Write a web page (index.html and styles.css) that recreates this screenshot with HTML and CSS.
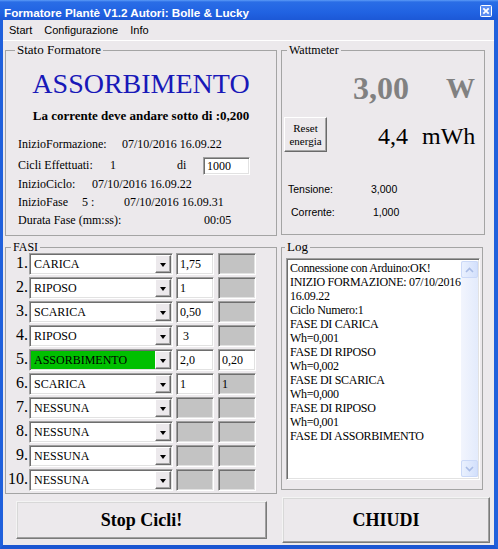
FILE: index.html
```html
<!DOCTYPE html>
<html lang="it">
<head>
<meta charset="utf-8">
<title>Formatore Plantè</title>
<link rel="stylesheet" href="styles.css">
</head>
<body>
<div class="window">
  <div class="titlebar">
    <span class="title">Formatore Plantè V1.2 Autori: Bolle &amp; Lucky</span>
    <svg class="close" width="12" height="12" viewBox="0 0 12 12"><rect x="0.5" y="0.5" width="11" height="11" rx="1" fill="#5b8ef2" stroke="#fff"/><path d="M3.3 3.3 L8.7 8.7 M8.7 3.3 L3.3 8.7" stroke="#fff" stroke-width="1.8"/></svg>
  </div>
  <div class="frame">
    <div class="menubar"><span>Start</span><span>Configurazione</span><span>Info</span></div>
    <div class="client">
      <fieldset class="group stato">
        <legend>Stato Formatore</legend>
        <div class="stato-title">ASSORBIMENTO</div>
        <div class="stato-msg">La corrente deve andare sotto di :0,200</div>
        <div class="info">
          <div class="irow h21"><span class="w104">InizioFormazione:</span><span>07/10/2016 16.09.22</span></div>
          <div class="irow h19"><span class="w92">Cicli Effettuati:</span><span class="w67">1</span><span class="w26">di</span><span class="sunken cicli">1000</span></div>
          <div class="irow h18"><span class="w74">InizioCiclo:</span><span>07/10/2016 16.09.22</span></div>
          <div class="irow h18"><span class="w64">InizioFase</span><span class="w42">5 :</span><span>07/10/2016 16.09.31</span></div>
          <div class="irow h18"><span class="w186">Durata Fase (mm:ss):</span><span>00:05</span></div>
        </div>
      </fieldset>

      <fieldset class="group watt">
        <legend>Wattmeter</legend>
        <div class="power"><span class="pnum">3,00</span><span class="punit">W</span></div>
        <div class="energy">
          <div class="raised reset">Reset<br>energia</div>
          <span class="enum">4,4</span><span class="eunit">mWh</span>
        </div>
        <div class="meas m1"><span class="w83">Tensione:</span><span>3,000</span></div>
        <div class="meas m2"><span class="w82">Corrente:</span><span>1,000</span></div>
      </fieldset>

      <fieldset class="group fasi">
        <legend>FASI</legend>
        <div class="frow"><span class="fnum">1.</span><div class="combo sunken"><span class="ctext">CARICA</span><span class="drop raised"><i class="arrow"></i></span></div><span class="tb sunken t1">1,75</span><span class="tb sunken t2 off"></span></div>
        <div class="frow"><span class="fnum">2.</span><div class="combo sunken"><span class="ctext">RIPOSO</span><span class="drop raised"><i class="arrow"></i></span></div><span class="tb sunken t1">1</span><span class="tb sunken t2 off"></span></div>
        <div class="frow"><span class="fnum">3.</span><div class="combo sunken"><span class="ctext">SCARICA</span><span class="drop raised"><i class="arrow"></i></span></div><span class="tb sunken t1">0,50</span><span class="tb sunken t2 off"></span></div>
        <div class="frow"><span class="fnum">4.</span><div class="combo sunken"><span class="ctext">RIPOSO</span><span class="drop raised"><i class="arrow"></i></span></div><span class="tb sunken t1 indent">3</span><span class="tb sunken t2 off"></span></div>
        <div class="frow"><span class="fnum">5.</span><div class="combo sunken sel"><span class="ctext">ASSORBIMENTO</span><span class="drop raised"><i class="arrow"></i></span></div><span class="tb sunken t1">2,0</span><span class="tb sunken t2">0,20</span></div>
        <div class="frow"><span class="fnum">6.</span><div class="combo sunken"><span class="ctext">SCARICA</span><span class="drop raised"><i class="arrow"></i></span></div><span class="tb sunken t1">1</span><span class="tb sunken t2 off">1</span></div>
        <div class="frow"><span class="fnum">7.</span><div class="combo sunken"><span class="ctext">NESSUNA</span><span class="drop raised"><i class="arrow"></i></span></div><span class="tb sunken t1 off"></span><span class="tb sunken t2 off"></span></div>
        <div class="frow"><span class="fnum">8.</span><div class="combo sunken"><span class="ctext">NESSUNA</span><span class="drop raised"><i class="arrow"></i></span></div><span class="tb sunken t1 off"></span><span class="tb sunken t2 off"></span></div>
        <div class="frow"><span class="fnum">9.</span><div class="combo sunken"><span class="ctext">NESSUNA</span><span class="drop raised"><i class="arrow"></i></span></div><span class="tb sunken t1 off"></span><span class="tb sunken t2 off"></span></div>
        <div class="frow"><span class="fnum">10.</span><div class="combo sunken"><span class="ctext">NESSUNA</span><span class="drop raised"><i class="arrow"></i></span></div><span class="tb sunken t1 off"></span><span class="tb sunken t2 off"></span></div>
      </fieldset>

      <fieldset class="group log">
        <legend>Log</legend>
        <div class="logbox sunken">
          <div class="logtext">Connessione con Arduino:OK!<br>INIZIO FORMAZIONE: 07/10/2016<br>16.09.22<br>Ciclo Numero:1<br>FASE DI CARICA<br>Wh=0,001<br>FASE DI RIPOSO<br>Wh=0,002<br>FASE DI SCARICA<br>Wh=0,000<br>FASE DI RIPOSO<br>Wh=0,001<br>FASE DI ASSORBIMENTO</div>
          <div class="scroll">
            <span class="sbtn"><svg width="9" height="6" viewBox="0 0 9 6"><path d="M1 5 L4.5 1.5 L8 5" fill="none" stroke="#a9bce6" stroke-width="1.6"/></svg></span>
            <span class="strack"></span>
            <span class="sbtn"><svg width="9" height="6" viewBox="0 0 9 6"><path d="M1 1 L4.5 4.5 L8 1" fill="none" stroke="#a9bce6" stroke-width="1.6"/></svg></span>
          </div>
        </div>
      </fieldset>

      <div class="raised bigbtn stop">Stop Cicli!</div>
      <div class="raised bigbtn chiudi">CHIUDI</div>
    </div>
  </div>
</div>
</body>
</html>
```

FILE: styles.css
```css
html, body {
  margin: 0;
  padding: 0;
}
body {
  width: 498px;
  height: 549px;
  overflow: hidden;
  background: #ece9ec;
  font-family: "Liberation Serif", "Times New Roman", serif;
  color: #000;
}
.window {
  width: 498px;
  height: 549px;
  display: flex;
  flex-direction: column;
}
.titlebar {
  height: 20px;
  flex: none;
  display: flex;
  align-items: flex-start;
  justify-content: space-between;
  padding: 0 6px 0 4px;
  background: linear-gradient(#5c9bf7 0px, #2a6de6 2px, #2163e2 60%, #1c58d6 100%);
  color: #fff;
}
.title {
  font: bold 11.7px/13px "Liberation Sans", Arial, sans-serif;
  margin-top: 6px;
  white-space: nowrap;
}
.close {
  margin-top: 5px;
}
.frame {
  flex: 1;
  display: flex;
  flex-direction: column;
  border-left: 3px solid #2060dc;
  border-right: 4px solid #2060dc;
  border-bottom: 4px solid #1b56d2;
  background: #ece9ec;
}
.menubar {
  height: 20px;
  flex: none;
  display: flex;
  gap: 12px;
  padding-left: 6px;
  border-bottom: 1px solid #fff;
  font: 11px/20px "Liberation Sans", Arial, sans-serif;
}
.client {
  flex: 1;
  display: grid;
  grid-template-columns: 272px 209px;
  grid-template-rows: 193px auto auto;
  column-gap: 4px;
  row-gap: 5px;
  padding: 2px 0 0 2px;
  align-items: start;
  justify-items: start;
}

/* group boxes */
.group {
  margin: 0;
  padding: 0;
  min-width: 0;
  border: 1px solid #a4a4a4;
  box-sizing: border-box;
}
.group legend {
  padding: 0 2px;
  font-family: "Liberation Serif", "Times New Roman", serif;
}

/* Stato Formatore */
.stato {
  width: 272px;
  height: 193px;
}
.stato legend {
  font-size: 13px;
  line-height: 14px;
  margin-left: 9px;
}
.stato-title {
  margin-top: 11px;
  text-align: center;
  font-size: 28px;
  line-height: 32px;
  color: #1818b8;
}
.stato-msg {
  margin-top: 8px;
  text-align: center;
  font-weight: bold;
  font-size: 13px;
  line-height: 15px;
}
.info {
  margin-top: 12px;
  padding-left: 12px;
  font-size: 12px;
  line-height: 19px;
}
.irow {
  display: flex;
  align-items: flex-start;
  white-space: nowrap;
}
.h21 { height: 21px; }
.h19 { height: 19px; }
.h18 { height: 18px; }
.w104 { width: 104px; }
.w92 { width: 92px; }
.w67 { width: 67px; }
.w26 { width: 26px; }
.w74 { width: 74px; }
.w64 { width: 64px; }
.w42 { width: 42px; }
.w186 { width: 186px; }
.w83 { width: 83px; }
.w82 { width: 82px; }
.cicli {
  width: 47px;
  height: 18px;
  box-sizing: border-box;
  margin-top: 1px;
  padding: 1px 0 0 3px;
  background: #fff;
  line-height: 15px;
}

/* 3D borders */
.sunken {
  border: 1px solid;
  border-color: #a0a0a0 #fff #fff #a0a0a0;
  box-shadow: inset 1px 1px 0 #6e6e6e, inset -1px -1px 0 #e2e2e2;
}
.raised {
  border: 1px solid;
  border-color: #fff #6a6a6a #6a6a6a #fff;
  box-shadow: inset -1px -1px 0 #a6a6a6;
  background: #ece9ec;
  box-sizing: border-box;
}

/* Wattmeter */
.watt {
  width: 204px;
  height: 192px;
}
.watt legend {
  font-size: 12px;
  line-height: 14px;
  margin-left: 5px;
}
.power {
  display: flex;
  margin-top: 13px;
  padding-left: 71px;
  font-weight: bold;
  font-size: 32px;
  line-height: 36px;
  color: #818181;
}
.pnum { width: 93px; }
.punit { font-size: 29px; }
.energy {
  display: flex;
  align-items: flex-start;
  margin-top: 11px;
  padding-left: 2px;
}
.reset {
  width: 43px;
  height: 35px;
  padding-top: 4px;
  text-align: center;
  font-size: 11px;
  line-height: 13px;
}
.enum {
  margin: 5px 0 0 51px;
  font-size: 24px;
  line-height: 28px;
}
.eunit {
  margin: 5px 0 0 14px;
  font-size: 24px;
  line-height: 28px;
}
.meas {
  display: flex;
  font: 10.5px/14px "Liberation Sans", Arial, sans-serif;
  white-space: nowrap;
}
.m1 { margin-top: 30px; padding-left: 6px; }
.m2 { margin-top: 9px; padding-left: 9px; }

/* FASI */
.fasi {
  width: 272px;
  height: 253px;
}
.fasi legend {
  font-size: 12px;
  line-height: 12px;
  margin-left: 5px;
}
.frow {
  display: flex;
  align-items: flex-start;
  height: 24px;
}
.fnum {
  width: 22px;
  padding-right: 1px;
  text-align: right;
  font-size: 16px;
  line-height: 20px;
}
.combo {
  width: 144px;
  height: 22px;
  box-sizing: border-box;
  padding: 1px;
  display: flex;
  background: #fff;
}
.ctext {
  flex: 1;
  padding-left: 3px;
  font-size: 12px;
  line-height: 18px;
  white-space: nowrap;
}
.combo.sel .ctext {
  background: #00c000;
}
.drop {
  flex: none;
  width: 16px;
  height: 18px;
  display: flex;
  justify-content: center;
  align-items: center;
}
.arrow {
  width: 0;
  height: 0;
  margin-top: 2px;
  border-left: 3.5px solid transparent;
  border-right: 3.5px solid transparent;
  border-top: 4px solid #000;
}
.tb {
  width: 38px;
  height: 22px;
  box-sizing: border-box;
  padding: 1px 0 0 3px;
  background: #fff;
  font-size: 12px;
  line-height: 18px;
}
.t1 { margin-left: 3px; }
.t2 { margin-left: 4px; }
.tb.off { background: #c3c3c3; }
.tb.indent { padding-left: 6px; }

/* Log */
.log {
  width: 202px;
  height: 249px;
  padding-bottom: 9px;
}
.log legend {
  font-size: 13px;
  line-height: 12px;
  margin-left: 3px;
}
.logbox {
  margin: 5px 0 0 4px;
  width: 194px;
  height: 222px;
  box-sizing: border-box;
  padding: 2px 1px 2px 2px;
  display: flex;
  background: #fff;
}
.logtext {
  flex: 1;
  min-width: 0;
  padding-left: 1px;
  font-size: 12px;
  line-height: 14px;
  letter-spacing: -0.3px;
  white-space: nowrap;
  overflow: hidden;
}
.scroll {
  flex: none;
  width: 17px;
  display: flex;
  flex-direction: column;
  background: linear-gradient(to right, #f2f5fd, #e3ebfc);
}
.sbtn {
  width: 17px;
  height: 17px;
  box-sizing: border-box;
  border: 1px solid #cbd9f8;
  border-radius: 2px;
  background: linear-gradient(to right, #eaf1fe, #d3e0fc);
  display: flex;
  align-items: center;
  justify-content: center;
}
.strack { flex: 1; }

/* bottom buttons */
.bigbtn {
  display: flex;
  align-items: center;
  justify-content: center;
  font-weight: bold;
  font-size: 18px;
  border-color: #f4f4f4 #7a7a7a #7a7a7a #f4f4f4;
  box-shadow: inset -1px -1px 0 #a0a0a0, inset 1px 1px 0 #d8d8d8;
}
.stop {
  margin-left: 11px;
  width: 251px;
  height: 38px;
}
.chiudi {
  margin: -4px 0 0 1px;
  width: 208px;
  height: 46px;
}
```
